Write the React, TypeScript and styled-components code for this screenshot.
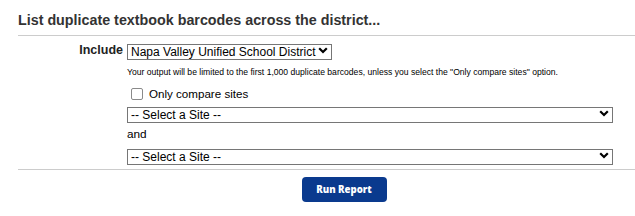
import styled, { createGlobalStyle } from "styled-components";

const GlobalStyle = createGlobalStyle`
  html, body {
    margin: 0;
    padding: 0;
    background: #ffffff;
    font-family: "Liberation Sans", Arial, sans-serif;
  }
`;

const Chevron = () => (
  <svg width="10" height="7" viewBox="0 0 10 7">
    <path d="M1.2 1.2 L5 5 L8.8 1.2" fill="none" stroke="#000" strokeWidth="2.2" />
  </svg>
);

const App = () => {
  return (
    <Page>
      <GlobalStyle />
      <Title>List duplicate textbook barcodes across the district...</Title>
      <Divider gap="8px" />
      <Form>
        <Label>Include</Label>
        <SelectWrap width="205px">
          <Select defaultValue="napa">
            <option value="napa">Napa Valley Unified School District</option>
          </Select>
          <Arrow>
            <Chevron />
          </Arrow>
        </SelectWrap>

        <Note>
          Your output will be limited to the first 1,000 duplicate barcodes,
          unless you select the "Only compare sites" option.
        </Note>

        <CheckRow>
          <Check type="checkbox" id="onlySites" />
          <CheckLabel htmlFor="onlySites">Only compare sites</CheckLabel>
        </CheckRow>

        <SelectWrap width="486px">
          <Select defaultValue="">
            <option value="">-- Select a Site --</option>
          </Select>
          <Arrow>
            <Chevron />
          </Arrow>
        </SelectWrap>

        <AndText>and</AndText>

        <SelectWrap width="486px">
          <Select defaultValue="">
            <option value="">-- Select a Site --</option>
          </Select>
          <Arrow>
            <Chevron />
          </Arrow>
        </SelectWrap>
      </Form>
      <Divider gap="6px" />
      <Footer>
        <RunButton>Run Report</RunButton>
      </Footer>
    </Page>
  );
};

const Page = styled.div`
  padding: 13px 0 0 18px;
  width: 617px;
`;

const Title = styled.h1`
  margin: 0;
  font-size: 14.3px;
  line-height: 14px;
  font-weight: 700;
  color: #333333;
`;

const Divider = styled.div<{ gap: string }>`
  height: 1px;
  background: #cccccc;
  margin-top: ${(p) => p.gap};
`;

const Form = styled.div`
  display: grid;
  grid-template-columns: 105px 486px;
  column-gap: 4px;
  padding-top: 6px;
`;

const Label = styled.div`
  grid-column: 1;
  text-align: right;
  font-size: 12.5px;
  font-weight: 700;
  color: #222222;
  line-height: 17px;
`;

const SelectWrap = styled.div<{ width: string }>`
  grid-column: 2;
  position: relative;
  width: ${(p) => p.width};
  height: 16px;
`;

const Select = styled.select`
  appearance: none;
  -webkit-appearance: none;
  width: 100%;
  height: 16px;
  box-sizing: border-box;
  margin: 0;
  padding: 0 10px 0 3px;
  border: 1px solid #767676;
  border-radius: 0;
  background: #ffffff;
  color: #000000;
  font-family: "Liberation Sans", Arial, sans-serif;
  font-size: 12px;
  line-height: 14px;
  outline: none;
`;

const Arrow = styled.span`
  position: absolute;
  right: 4px;
  top: 5px;
  display: flex;
  pointer-events: none;
`;

const Note = styled.div`
  grid-column: 2;
  margin-top: 8px;
  font-size: 8.6px;
  line-height: 10px;
  color: #000000;
  white-space: nowrap;
`;

const CheckRow = styled.div`
  grid-column: 2;
  display: flex;
  align-items: center;
  gap: 6px;
  margin-top: 9px;
  margin-bottom: 3px;
  padding-left: 4px;
`;

const Check = styled.input`
  appearance: none;
  -webkit-appearance: none;
  width: 12px;
  height: 12px;
  margin: 0;
  border: 1px solid #8a8a8a;
  border-radius: 2px;
  background: #ffffff;
`;

const CheckLabel = styled.label`
  font-size: 11.6px;
  line-height: 16px;
  color: #000000;
`;

const AndText = styled.div`
  grid-column: 2;
  font-size: 11.8px;
  line-height: 16px;
  margin: 5px 0 5px;
  color: #000000;
`;

const Footer = styled.div`
  display: flex;
  justify-content: center;
  padding: 7px 0 0 35px;
`;

const RunButton = styled.button`
  width: 85px;
  height: 25px;
  border: none;
  border-radius: 4px;
  background: #0a3a8e;
  color: #ffffff;
  font-family: "Open Sans", Arial, sans-serif;
  font-size: 9.6px;
  font-weight: 800;
  cursor: pointer;
`;

export default App;
